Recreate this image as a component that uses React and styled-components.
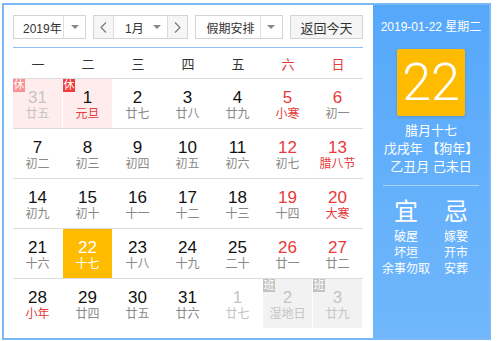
import styled, { createGlobalStyle } from "styled-components";

const GlobalStyle = createGlobalStyle`
  body {
    margin: 0;
    background: #fff;
    font-family: "Liberation Sans", "Noto Sans CJK SC", sans-serif;
  }
`;

const Widget = styled.div`
  margin: 3px 0 0 2px;
  width: 485px;
  height: 333px;
  border: 2px solid #7ab8f7;
  display: flex;
  background: #fff;
`;

const Main = styled.div`
  width: 350px;
  padding: 10px 10px 0 9px;
`;

const Toolbar = styled.div`
  display: flex;
  align-items: center;
  height: 24px;
`;

const Select = styled.div`
  display: flex;
  height: 22px;
  width: ${(p) => p.w}px;
  border: 1px solid #d3d3d3;
  margin-right: 7px;
  font-size: 12px;
  color: #333;
  background: #fff;
`;

const SelectText = styled.div`
  flex: 1;
  display: flex;
  align-items: center;
  padding-left: ${(p) => p.pl || 9}px;
`;

const Arrow = styled.div`
  width: 21px;
  display: flex;
  align-items: center;
  justify-content: center;
  border-left: ${(p) => (p.line ? "1px solid #e0e0e0" : "none")};
  &::after {
    content: "";
    border-left: 4px solid transparent;
    border-right: 4px solid transparent;
    border-top: 4px solid #888;
  }
`;

const Step = styled.div`
  width: 19px;
  display: flex;
  align-items: center;
  justify-content: center;
  background: #f6f6f6;
  border-left: ${(p) => (p.right ? "1px solid #dcdcdc" : "none")};
  border-right: ${(p) => (p.right ? "none" : "1px solid #dcdcdc")};
`;

const TodayButton = styled.div`
  margin-left: auto;
  width: 73px;
  height: 22px;
  border: 1px solid #d3d3d3;
  background: #f5f5f5;
  font-size: 13px;
  color: #333;
  display: flex;
  align-items: center;
  justify-content: center;
`;

const Divider = styled.div`
  height: 1px;
  background: #8dc0f5;
  margin-top: 8px;
`;

const WeekRow = styled.div`
  display: grid;
  grid-template-columns: repeat(7, 50px);
  height: 30px;
  align-items: center;
`;

const WeekName = styled.div`
  text-align: center;
  font-size: 13px;
  color: ${(p) => (p.red ? "#e83a3a" : "#333")};
`;

const Row = styled.div`
  display: flex;
  border-top: 1px solid #dcdcdc;
  height: 49px;
`;

const bgFor = (p) => {
  if (p.today) return "#ffbb00";
  if (p.rest) return "#ffeded";
  if (p.work) return "#f2f2f2";
  return "transparent";
};

const Cell = styled.div`
  position: relative;
  width: 49px;
  margin-right: 1px;
  height: 49px;
  background: ${bgFor};
  text-align: center;
  padding-top: 10px;
  box-sizing: border-box;
`;

const Num = styled.div`
  font-size: 17px;
  line-height: 18px;
  color: ${(p) => p.c};
`;

const Lunar = styled.div`
  font-size: 12px;
  line-height: 14px;
  color: ${(p) => p.c};
`;

const Badge = styled.span`
  position: absolute;
  left: 0;
  top: 0;
  width: 12px;
  height: 13px;
  line-height: 13px;
  font-size: 11px;
  color: #fff;
  text-align: center;
  background: ${(p) => p.bg};
`;

const Side = styled.div`
  width: 118px;
  margin-left: auto;
  background: linear-gradient(#56a8fb, #70b7fb);
  color: #fff;
  text-align: center;
  padding-top: 14px;
  box-sizing: border-box;
`;

const DateLine = styled.div`
  font-size: 12px;
  line-height: 16px;
`;

const BigDay = styled.div`
  margin: 14px auto 0;
  width: 68px;
  height: 67px;
  background: #ffbb00;
  border-radius: 2px;
  box-shadow: 0 1px 3px rgba(0, 0, 0, 0.15);
  font-family: Roboto, "Liberation Sans", sans-serif;
  font-weight: 300;
  font-size: 52px;
  line-height: 67px;
`;

const LunarInfo = styled.div`
  margin-top: 6px;
  font-size: 13px;
  line-height: 18px;
`;

const SideRule = styled.div`
  height: 1px;
  margin: 9px 10px 0;
  background: rgba(255, 255, 255, 0.45);
`;

const Advice = styled.div`
  display: grid;
  grid-template-columns: 1fr 1fr;
  padding: 11px 8px 0;
`;

const AdviceCol = styled.div`
  display: flex;
  flex-direction: column;
  align-items: center;
`;

const AdviceHead = styled.div`
  font-size: 24px;
  line-height: 30px;
  margin-bottom: 2px;
`;

const AdviceItem = styled.div`
  font-size: 12px;
  line-height: 16px;
`;

const Chevron = ({ dir }) => (
  <svg width="7" height="11" viewBox="0 0 7 11">
    <polyline
      points={dir === "l" ? "6,0.5 1,5.5 6,10.5" : "1,0.5 6,5.5 1,10.5"}
      fill="none"
      stroke="#777"
      strokeWidth="1.1"
    />
  </svg>
);

// [day, lunar, flags] flags: o other month, w weekend, f festival, r rest, b work, t today
const weeks = [
  [["31", "廿五", "or"], ["1", "元旦", "fr"], ["2", "廿七"], ["3", "廿八"], ["4", "廿九"], ["5", "小寒", "wf"], ["6", "初一", "w"]],
  [["7", "初二"], ["8", "初三"], ["9", "初四"], ["10", "初五"], ["11", "初六"], ["12", "初七", "w"], ["13", "腊八节", "wf"]],
  [["14", "初九"], ["15", "初十"], ["16", "十一"], ["17", "十二"], ["18", "十三"], ["19", "十四", "w"], ["20", "大寒", "wf"]],
  [["21", "十六"], ["22", "十七", "t"], ["23", "十八"], ["24", "十九"], ["25", "二十"], ["26", "廿一", "w"], ["27", "廿二", "w"]],
  [["28", "小年", "f"], ["29", "廿四"], ["30", "廿五"], ["31", "廿六"], ["1", "廿七", "o"], ["2", "湿地日", "ob"], ["3", "廿九", "ob"]],
];

function DayCell({ day, lunar, flags = "" }) {
  const other = flags.includes("o");
  const today = flags.includes("t");
  let numColor = flags.includes("w") ? "#e83a3a" : "#111";
  let lunarColor = flags.includes("f") ? "#e83a3a" : "#888";
  if (other) {
    numColor = "#c4c4c4";
    lunarColor = "#c4c4c4";
  }
  if (today) {
    numColor = "#fff";
    lunarColor = "#fff";
  }
  return (
    <Cell today={today} rest={flags.includes("r")} work={flags.includes("b")}>
      {flags.includes("r") && <Badge bg={other ? "#fb8f8f" : "#f43a3a"}>休</Badge>}
      {flags.includes("b") && <Badge bg="#c2c2c2">班</Badge>}
      <Num c={numColor}>{day}</Num>
      <Lunar c={lunarColor}>{lunar}</Lunar>
    </Cell>
  );
}

export default function App() {
  return (
    <>
      <GlobalStyle />
      <Widget>
        <Main>
          <Toolbar>
            <Select w={73}>
              <SelectText>2019年</SelectText>
              <Arrow line />
            </Select>
            <Select w={96}>
              <Step>
                <Chevron dir="l" />
              </Step>
              <SelectText pl={11}>1月</SelectText>
              <Arrow />
              <Step right>
                <Chevron dir="r" />
              </Step>
            </Select>
            <Select w={88}>
              <SelectText pl={10}>假期安排</SelectText>
              <Arrow line />
            </Select>
            <TodayButton>返回今天</TodayButton>
          </Toolbar>
          <Divider />
          <WeekRow>
            {["一", "二", "三", "四", "五", "六", "日"].map((d, i) => (
              <WeekName key={d} red={i > 4}>
                {d}
              </WeekName>
            ))}
          </WeekRow>
          {weeks.map((week, i) => (
            <Row key={i}>
              {week.map(([day, lunar, flags], j) => (
                <DayCell key={j} day={day} lunar={lunar} flags={flags} />
              ))}
            </Row>
          ))}
        </Main>
        <Side>
          <DateLine>2019-01-22 星期二</DateLine>
          <BigDay>22</BigDay>
          <LunarInfo>
            <div>腊月十七</div>
            <div>戊戌年 【狗年】</div>
            <div>乙丑月 己未日</div>
          </LunarInfo>
          <SideRule />
          <Advice>
            <AdviceCol>
              <AdviceHead>宜</AdviceHead>
              <AdviceItem>破屋</AdviceItem>
              <AdviceItem>坏垣</AdviceItem>
              <AdviceItem>余事勿取</AdviceItem>
            </AdviceCol>
            <AdviceCol>
              <AdviceHead>忌</AdviceHead>
              <AdviceItem>嫁娶</AdviceItem>
              <AdviceItem>开市</AdviceItem>
              <AdviceItem>安葬</AdviceItem>
            </AdviceCol>
          </Advice>
        </Side>
      </Widget>
    </>
  );
}
